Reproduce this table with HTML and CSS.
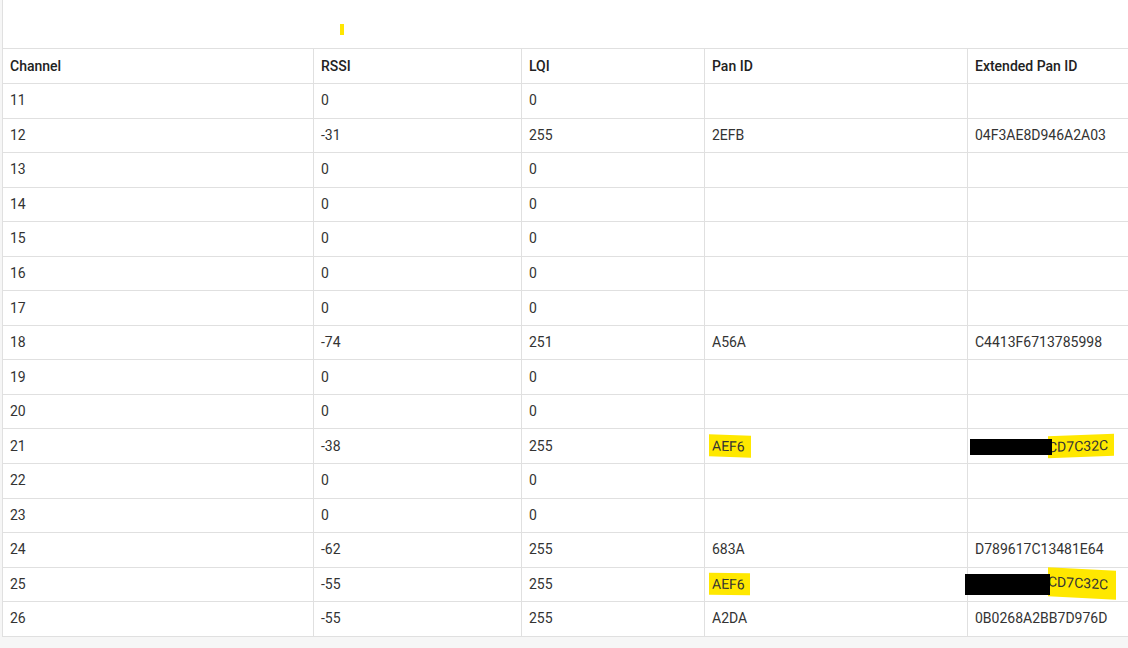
FILE: index.html
```html
<!DOCTYPE html>
<html>
<head>
<meta charset="utf-8">
<link rel="stylesheet" href="styles.css">
</head>
<body>
<div class="panel">
  <div class="toolbar"><span class="marker"></span></div>
  <table class="scan">
    <colgroup>
      <col class="c1"><col class="c2"><col class="c3"><col class="c4"><col class="c5">
    </colgroup>
    <thead>
      <tr><th>Channel</th><th>RSSI</th><th>LQI</th><th>Pan ID</th><th>Extended Pan ID</th></tr>
    </thead>
    <tbody>
      <tr><td>11</td><td>0</td><td>0</td><td></td><td></td></tr>
      <tr><td>12</td><td>-31</td><td>255</td><td>2EFB</td><td>04F3AE8D946A2A03</td></tr>
      <tr><td>13</td><td>0</td><td>0</td><td></td><td></td></tr>
      <tr><td>14</td><td>0</td><td>0</td><td></td><td></td></tr>
      <tr><td>15</td><td>0</td><td>0</td><td></td><td></td></tr>
      <tr><td>16</td><td>0</td><td>0</td><td></td><td></td></tr>
      <tr><td>17</td><td>0</td><td>0</td><td></td><td></td></tr>
      <tr><td>18</td><td>-74</td><td>251</td><td>A56A</td><td>C4413F6713785998</td></tr>
      <tr><td>19</td><td>0</td><td>0</td><td></td><td></td></tr>
      <tr><td>20</td><td>0</td><td>0</td><td></td><td></td></tr>
      <tr><td>21</td><td>-38</td><td>255</td><td><span class="hl hl-a">AEF6</span></td><td><span class="redact r1"></span><span class="hl hl-b">CD7C32C</span></td></tr>
      <tr><td>22</td><td>0</td><td>0</td><td></td><td></td></tr>
      <tr><td>23</td><td>0</td><td>0</td><td></td><td></td></tr>
      <tr><td>24</td><td>-62</td><td>255</td><td>683A</td><td>D789617C13481E64</td></tr>
      <tr><td>25</td><td>-55</td><td>255</td><td><span class="hl hl-c">AEF6</span></td><td><span class="redact r2"></span><span class="hl hl-d">CD7C32C</span></td></tr>
      <tr><td>26</td><td>-55</td><td>255</td><td>A2DA</td><td>0B0268A2BB7D976D</td></tr>
    </tbody>
  </table>
</div>
</body>
</html>
```
FILE: styles.css
```css
html, body {
  margin: 0;
  padding: 0;
}
body {
  background: #f6f6f6;
  font-family: Roboto, "Liberation Sans", sans-serif;
  font-size: 14px;
  color: #333;
  overflow: hidden;
  width: 1128px;
  height: 648px;
}
.panel {
  margin-left: 2px;
  width: 1125px;
  background: #fff;
  border-left: 1px solid #e0e0e0;
  overflow: hidden;
}
.toolbar {
  height: 48px;
  position: relative;
}
.marker {
  position: absolute;
  left: 337px;
  top: 24px;
  width: 4px;
  height: 11px;
  background: #ffe600;
}
.scan {
  border-collapse: collapse;
  table-layout: fixed;
  width: 1126px;
  margin-left: -1px;
}
.c1 { width: 311px; }
.c2 { width: 208px; }
.c3 { width: 183px; }
.c4 { width: 263px; }
.c5 { width: 161px; }
.scan th, .scan td {
  border: 1px solid #e0e0e0;
  text-align: left;
  padding: 0 7px 1px;
  white-space: nowrap;
  overflow: hidden;
  vertical-align: middle;
  height: 34.56px;
  box-sizing: border-box;
}
.scan tr > :last-child {
  border-right: 0;
  overflow: visible;
}
.scan th {
  font-weight: 500;
  color: #222;
  height: 35px;
}
.hl {
  background: #ffe800;
  display: inline-block;
  line-height: 20px;
}
.hl-a {
  margin-left: -3px;
  padding: 1px 6px 1px 3px;
  transform: skewY(2deg);
}
.hl-b {
  padding: 1px 6px 1px 0;
  transform: skewY(-2deg);
}
.hl-c {
  margin-left: -3px;
  padding: 1px 5px 1px 3px;
  transform: skewY(1deg);
}
.hl-d {
  padding: 4px 8px 5px 0;
  transform: skewY(3deg);
}
.redact {
  display: inline-block;
  background: #000;
  vertical-align: middle;
}
.r1 {
  width: 82px;
  height: 16px;
  margin-left: -5px;
  margin-right: -4px;
  position: relative;
  z-index: 1;
}
.r2 {
  width: 85px;
  height: 21px;
  margin-left: -10px;
  margin-right: -2px;
  position: relative;
  z-index: 1;
}
```
